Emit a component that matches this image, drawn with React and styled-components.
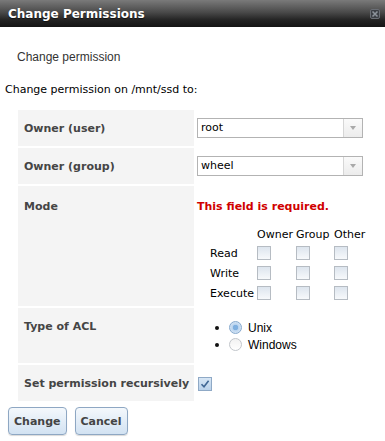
import React from "react";
import styled, { createGlobalStyle } from "styled-components";

const GlobalStyle = createGlobalStyle`
  html, body {
    margin: 0;
    padding: 0;
    background: #ffffff;
  }
  body {
    font-family: "DejaVu Sans", Verdana, sans-serif;
    font-size: 11px;
    color: #000;
  }
`;

const Dialog = styled.div`
  width: 385px;
  height: 441px;
  background: #ffffff;
  overflow: hidden;
`;

const TitleBar = styled.div`
  height: 27px;
  display: flex;
  align-items: center;
  justify-content: space-between;
  padding: 0 5px 0 8px;
  background: linear-gradient(#7a7a7a 0%, #4a4a4a 45%, #222 75%, #141414 100%);
  h1 {
    margin: 0;
    font-size: 12px;
    font-weight: bold;
    color: #ffffff;
    text-shadow: 0 1px 1px rgba(0, 0, 0, 0.6);
  }
`;

const Content = styled.div`
  padding: 0 5px;
`;

const Subtitle = styled.div`
  font-family: "Liberation Sans", Arial, sans-serif;
  font-size: 12px;
  line-height: 14px;
  color: #333;
  padding: 23px 0 0 12px;
`;

const Intro = styled.div`
  font-size: 11px;
  line-height: 13px;
  margin-top: 19px;
`;

const Form = styled.div`
  display: grid;
  grid-template-columns: 176px 1fr;
  column-gap: 3px;
  row-gap: 2px;
  margin: 14px 0 0 13px;
`;

const Label = styled.div`
  background: #f4f4f4;
  padding: ${(p) => p.$top || "12px"} 6px 10px;
  font-weight: bold;
  font-size: 11px;
  line-height: 14px;
  color: #454545;
  white-space: nowrap;
`;

const Value = styled.div`
  padding: ${(p) => p.$pad || "8px 0"};
`;

const SelectBox = styled.div`
  width: 166px;
  height: 20px;
  box-sizing: border-box;
  border: 1px solid #b3b3b3;
  display: flex;
  align-items: stretch;
  background: #fff;
  span {
    flex: 1;
    padding-left: 3px;
    line-height: 18px;
    font-size: 11px;
  }
`;

const Arrow = styled.div`
  width: 18px;
  border-left: 1px solid #d6d6d6;
  background: linear-gradient(#fafafa, #ececec);
  display: flex;
  align-items: center;
  justify-content: center;
  &::after {
    content: "";
    border-left: 3.5px solid transparent;
    border-right: 3.5px solid transparent;
    border-top: 4px solid #a9a9a9;
  }
`;

const ErrorText = styled.div`
  color: #d00000;
  font-weight: bold;
  font-size: 11px;
  line-height: 14px;
`;

const PermGrid = styled.div`
  display: grid;
  grid-template-columns: 47px 39px 38px auto;
  grid-auto-rows: 20px;
  grid-template-rows: 18px;
  align-items: center;
  margin: 11px 0 0 13px;
  font-size: 11px;
`;

const Check = styled.div`
  width: 14px;
  height: 14px;
  box-sizing: border-box;
  border: 1px solid #b6bcc3;
  background: ${(p) =>
    p.$checked
      ? "linear-gradient(#d7e6f5, #b9d1ea)"
      : "linear-gradient(#dde5ee, #f7f9fb)"};
  display: flex;
  align-items: center;
  justify-content: center;
  border-color: ${(p) => (p.$checked ? "#8fa9c6" : "#b6bcc3")};
`;

const RadioList = styled.div`
  display: flex;
  flex-direction: column;
  margin-left: 18px;
`;

const RadioRow = styled.div`
  display: flex;
  align-items: center;
  height: 17px;
  font-family: "Liberation Sans", Arial, sans-serif;
  font-size: 12px;
`;

const Bullet = styled.span`
  width: 4px;
  height: 4px;
  border-radius: 50%;
  background: #111;
  margin-right: 10px;
`;

const Radio = styled.span`
  width: 13px;
  height: 13px;
  box-sizing: border-box;
  border-radius: 50%;
  margin-right: 6px;
  border: 1px solid ${(p) => (p.$on ? "#86a9cd" : "#c2c6cb")};
  background: ${(p) =>
    p.$on
      ? "radial-gradient(circle, #7fb0e0 0 2.5px, #b9d3ee 3px, #e8f1fa 100%)"
      : "linear-gradient(#f2f2f2, #ffffff)"};
`;

const Buttons = styled.div`
  display: flex;
  gap: 8px;
  margin: 6px 0 0 3px;
`;

const Button = styled.button`
  height: 28px;
  padding: 0 5px;
  border: 1px solid #8ea7c3;
  border-radius: 4px;
  background: linear-gradient(#f4f8fc, #d2e2f2);
  box-shadow: 0 1px 1px rgba(0, 0, 0, 0.15);
  font-family: "DejaVu Sans", Verdana, sans-serif;
  font-weight: bold;
  font-size: 11px;
  color: #444;
`;

function CloseIcon() {
  return (
    <svg width="10" height="10" viewBox="0 0 10 10">
      <rect x="0.5" y="0.5" width="9" height="9" rx="1.5" fill="#3c3f45" stroke="#6a6e75" />
      <path d="M2.5 2.5 L7.5 7.5 M7.5 2.5 L2.5 7.5" stroke="#8d939b" strokeWidth="1.6" />
    </svg>
  );
}

function Select({ value }) {
  return (
    <SelectBox>
      <span>{value}</span>
      <Arrow />
    </SelectBox>
  );
}

export default function App() {
  const perms = ["Read", "Write", "Execute"];
  return (
    <>
      <GlobalStyle />
      <Dialog>
        <TitleBar>
          <h1>Change Permissions</h1>
          <CloseIcon />
        </TitleBar>
        <Content>
          <Subtitle>Change permission</Subtitle>
          <Intro>Change permission on /mnt/ssd to:</Intro>
          <Form>
            <Label>Owner (user)</Label>
            <Value>
              <Select value="root" />
            </Value>

            <Label>Owner (group)</Label>
            <Value>
              <Select value="wheel" />
            </Value>

            <Label $top="14px">Mode</Label>
            <Value $pad="14px 0 3px">
              <ErrorText>This field is required.</ErrorText>
              <PermGrid>
                <span />
                <span>Owner</span>
                <span>Group</span>
                <span>Other</span>
                {perms.map((p) => (
                  <React.Fragment key={p}>
                    <span>{p}</span>
                    <Check />
                    <Check />
                    <Check />
                  </React.Fragment>
                ))}
              </PermGrid>
            </Value>

            <Label>Type of ACL</Label>
            <Value $pad="11px 0 10px">
              <RadioList>
                <RadioRow>
                  <Bullet />
                  <Radio $on />
                  Unix
                </RadioRow>
                <RadioRow>
                  <Bullet />
                  <Radio />
                  Windows
                </RadioRow>
              </RadioList>
            </Value>

            <Label>Set permission recursively</Label>
            <Value $pad="12px 0 0 1px">
              <Check $checked>
                <svg width="10" height="10" viewBox="0 0 10 10">
                  <path d="M1.5 5.2 L4 7.8 L8.6 1.8" fill="none" stroke="#3f6694" strokeWidth="1.6" />
                </svg>
              </Check>
            </Value>
          </Form>
          <Buttons>
            <Button>Change</Button>
            <Button>Cancel</Button>
          </Buttons>
        </Content>
      </Dialog>
    </>
  );
}
